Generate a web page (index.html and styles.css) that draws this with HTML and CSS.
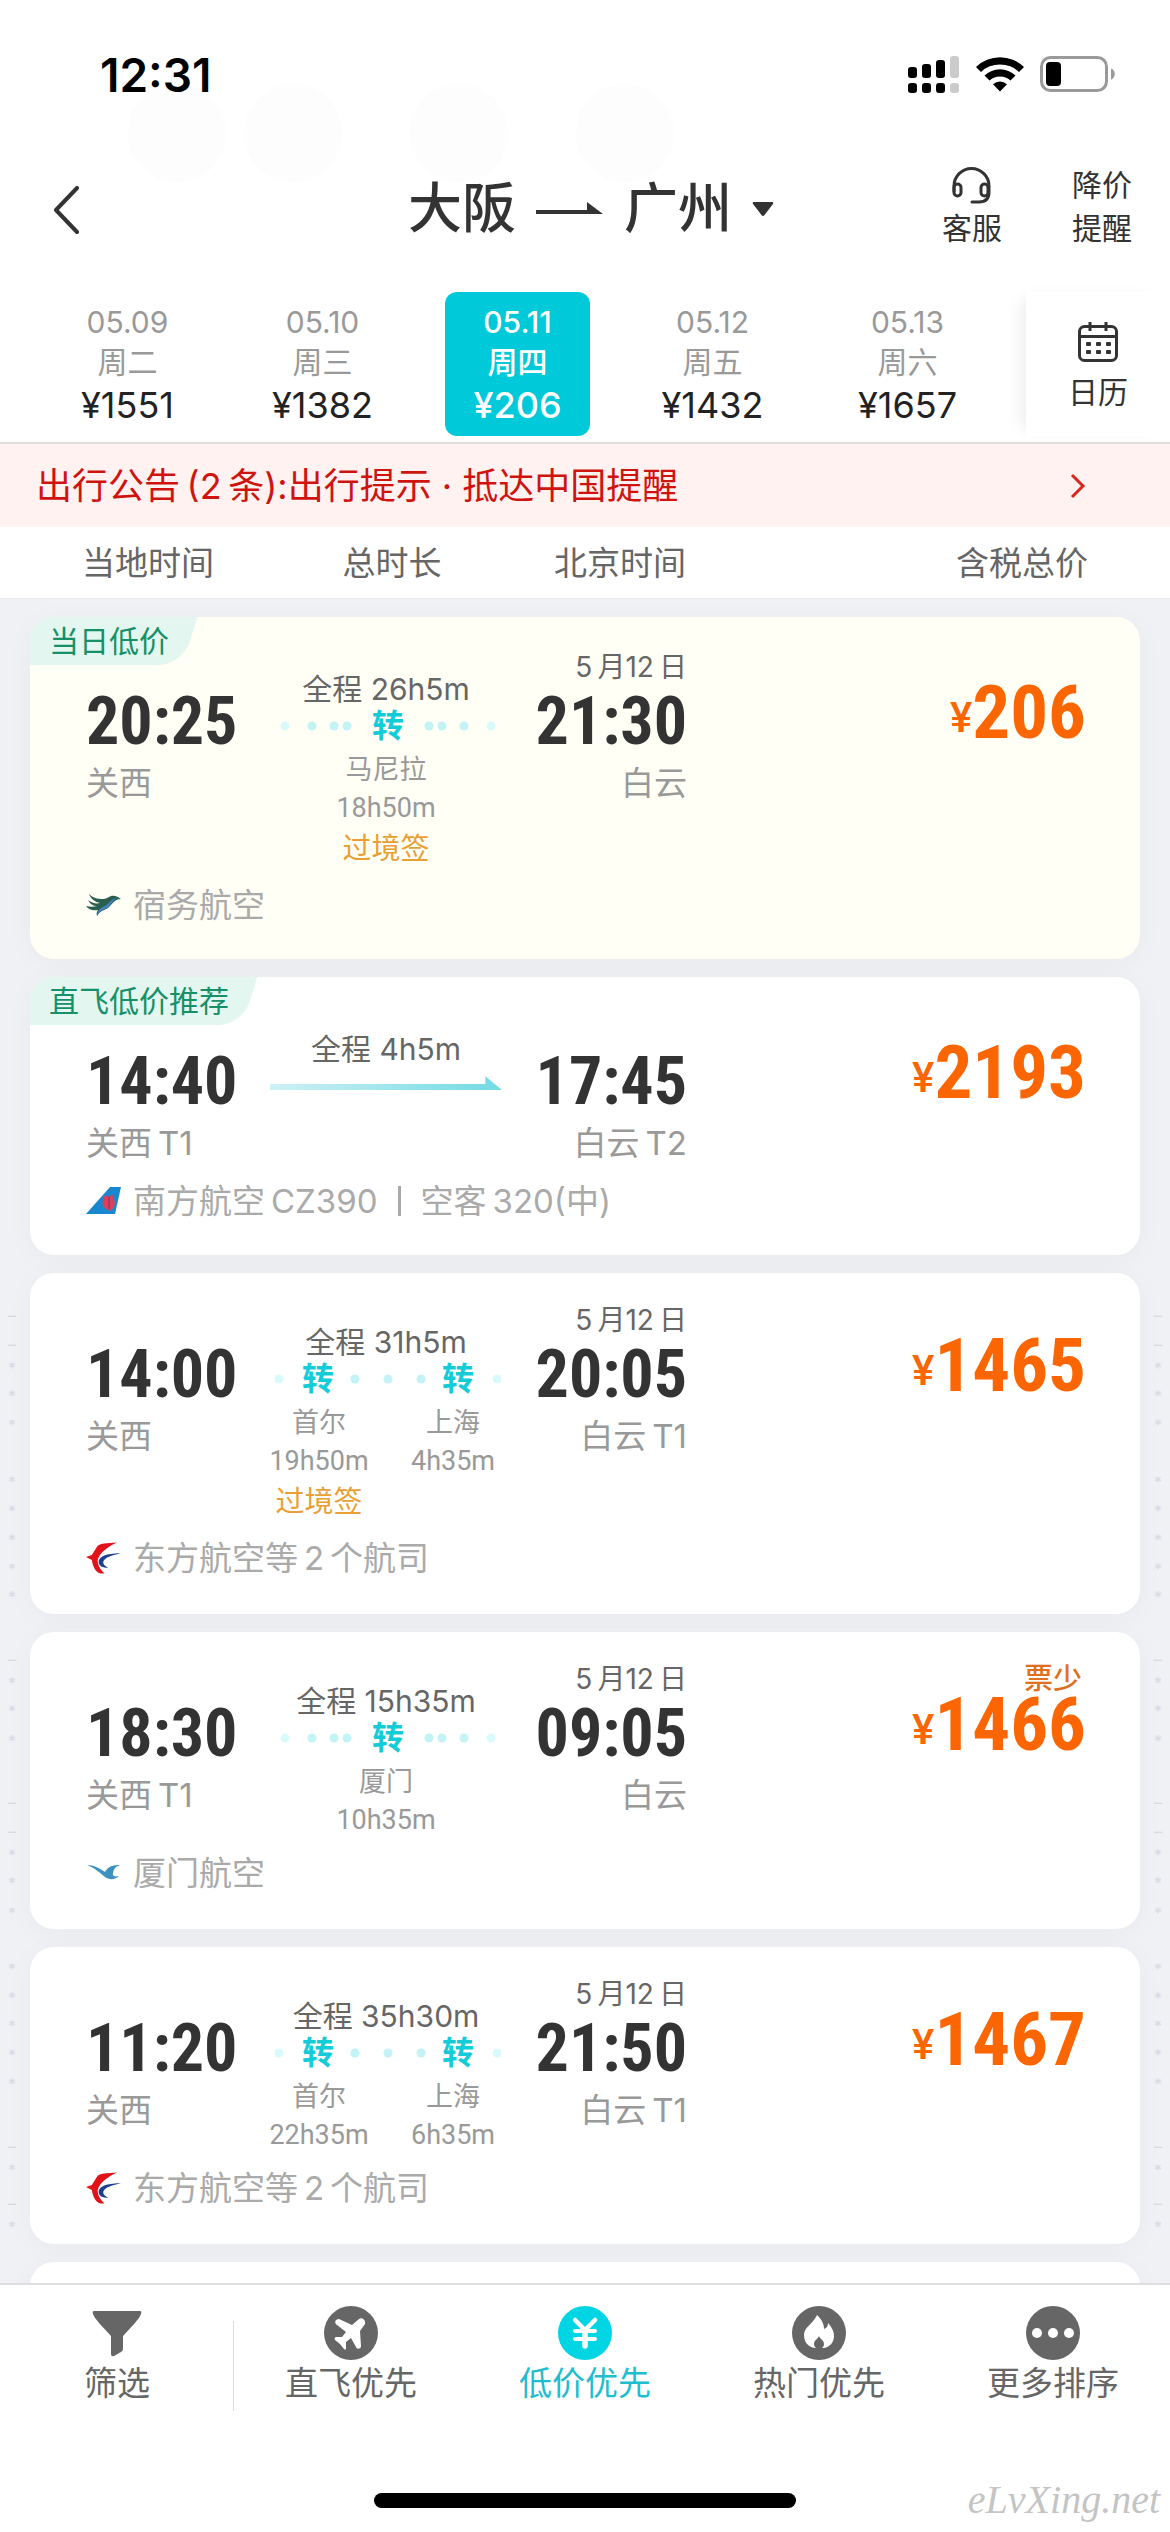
FILE: index.html
```html
<!DOCTYPE html>
<html lang="zh-CN">
<head>
<meta charset="utf-8">
<meta name="viewport" content="width=device-width, initial-scale=1">
<title>大阪 - 广州 机票</title>
<link rel="stylesheet" href="styles.css">
</head>
<body>
<svg class="defs" aria-hidden="true">
  <symbol id="dots-left" viewBox="0 0 78 10">
    <circle cx="11" cy="5" r="4.5" fill="#d9fafb"/><circle cx="38" cy="5" r="4.5" fill="#c3f3f5"/><circle cx="60" cy="5" r="4.5" fill="#c3f3f5"/><circle cx="73" cy="5" r="4.5" fill="#c3f3f5"/>
  </symbol>
  <symbol id="dots-right" viewBox="0 0 78 10">
    <circle cx="5" cy="5" r="4.5" fill="#c3f3f5"/><circle cx="18" cy="5" r="4.5" fill="#c3f3f5"/><circle cx="40" cy="5" r="4.5" fill="#c3f3f5"/><circle cx="67" cy="5" r="4.5" fill="#d9fafb"/>
  </symbol>
  <symbol id="dots-mid" viewBox="0 0 76 10">
    <circle cx="5" cy="5" r="4.5" fill="#c3f3f5"/><circle cx="38" cy="5" r="4.5" fill="#c3f3f5"/><circle cx="71" cy="5" r="4.5" fill="#c3f3f5"/>
  </symbol>
  <symbol id="dot-end" viewBox="0 0 14 10"><circle cx="7" cy="5" r="4.5" fill="#d9fafb"/></symbol>
  <symbol id="logo-eastern" viewBox="0 0 36 32">
    <path d="M32 0C22 1 13 0 11 5L6 13 0 15l6 3c1 6 3 12 9 14h4c-5-5-7-9-7-14C14 11 21 5 32 0z" fill="#e11218"/>
    <path d="M36 11C25 11 13 13 13 20c0 4 4 6 10 6-4-2-6-4-5-7 2-4 9-6 18-8z" fill="#1c3f94"/>
  </symbol>
</svg>

<header class="top">
  <div class="ghosts" aria-hidden="true"><i></i><i></i><i></i><i></i></div>
  <div class="status">
    <span class="clock">12:31</span>
    <span class="status-icons">
      <svg width="52" height="38" viewBox="0 0 52 38" aria-hidden="true">
        <g fill="#000"><rect x="0" y="11" width="9" height="11" rx="3"/><rect x="14" y="8" width="9" height="14" rx="3"/><rect x="28" y="4" width="9" height="18" rx="3"/><rect x="0" y="27" width="9" height="10" rx="3"/><rect x="14" y="27" width="9" height="10" rx="3"/><rect x="28" y="27" width="9" height="10" rx="3"/></g>
        <g fill="#cbcbcb"><rect x="42" y="0" width="9" height="22" rx="3"/><rect x="42" y="27" width="9" height="10" rx="3"/></g>
      </svg>
      <svg width="48" height="38" viewBox="0 0 48 38" aria-hidden="true">
        <path d="M0 11a34.500 34.500 0 0 1 48 0l-5 5a27.500 27.500 0 0 0-38 0z"/>
        <path d="M8.500 19.500a22.500 22.500 0 0 1 31 0l-5 5a15.500 15.500 0 0 0-21 0z"/>
        <path d="M17 28.200a10.500 10.500 0 0 1 14 0L24 35.500z"/>
      </svg>
      <svg width="76" height="38" viewBox="0 0 76 38" aria-hidden="true">
        <rect x="1.500" y="1.500" width="65" height="33" rx="9" fill="none" stroke="#9a9a9a" stroke-width="3"/>
        <rect x="6" y="6" width="15" height="24" rx="4"/>
        <path d="M71 12.500c5 1.500 5 9.500 0 11z" fill="#9a9a9a"/>
      </svg>
    </span>
  </div>
  <nav class="nav">
    <button class="back" type="button" aria-label="返回">
      <svg width="28" height="48" viewBox="0 0 28 48"><path d="M25 2 4 24l21 22" fill="none" stroke="#333" stroke-width="4" stroke-linecap="round" stroke-linejoin="round"/></svg>
    </button>
    <button class="route" type="button">
      <span>大阪</span>
      <svg width="68" height="14" viewBox="0 0 68 14" aria-hidden="true"><path d="M0 8h51V0l16 12H0z" fill="#333"/></svg>
      <span>广州</span>
      <svg width="22" height="14" viewBox="0 0 22 14" aria-hidden="true"><path d="M2 0h18q2 0 1 2l-8.500 11q-1.500 2-3 0L1 2Q0 0 2 0z" fill="#333"/></svg>
    </button>
    <div class="actions">
      <button class="action" type="button">
        <svg width="42" height="40" viewBox="0 0 42 40" aria-hidden="true"><g fill="none" stroke="#333" stroke-width="3" stroke-linecap="round"><path d="M3 24V19a17.500 17.500 0 0 1 35 0v6c0 7-4 10-10 10h-7"/><rect x="3" y="17" width="7" height="12" rx="3.500"/><rect x="30" y="17" width="7" height="12" rx="3.500"/></g></svg>
        客服
      </button>
      <button class="action" type="button">降价<br>提醒</button>
    </div>
  </nav>
  <div class="dates">
    <div class="strip">
      <button class="day" type="button"><span>05.09</span><span>周二</span><b>¥1551</b></button>
      <button class="day" type="button"><span>05.10</span><span>周三</span><b>¥1382</b></button>
      <button class="day day-on" type="button" aria-pressed="true"><span>05.11</span><span>周四</span><b>¥206</b></button>
      <button class="day" type="button"><span>05.12</span><span>周五</span><b>¥1432</b></button>
      <button class="day" type="button"><span>05.13</span><span>周六</span><b>¥1657</b></button>
    </div>
    <button class="calendar" type="button">
      <svg width="40" height="40" viewBox="0 0 40 40" aria-hidden="true"><g fill="none" stroke="#333" stroke-width="3"><rect x="1.500" y="4.500" width="37" height="34" rx="5"/><path d="M2 14.500h36M12 0v9M28 0v9"/></g><g fill="#333"><rect x="8" y="20" width="5" height="4" rx="1"/><rect x="18" y="20" width="5" height="4" rx="1"/><rect x="28" y="20" width="5" height="4" rx="1"/><rect x="8" y="28" width="5" height="4" rx="1"/><rect x="18" y="28" width="5" height="4" rx="1"/><rect x="28" y="28" width="5" height="4" rx="1"/></g></svg>
      日历
    </button>
  </div>
  <a class="notice" href="#notice">
    <span>出行公告&#8201;(2&#8201;条):出行提示 · 抵达中国提醒</span>
    <svg width="16" height="26" viewBox="0 0 16 26" aria-hidden="true"><path d="M2 2l11 11L2 24" fill="none" stroke="#d5281e" stroke-width="3"/></svg>
  </a>
  <div class="columns"><span>当地时间</span><span class="mid">总时长</span><span class="end">北京时间</span><span class="end">含税总价</span></div>
</header>

<main class="list">
  <svg class="marks marks-left" width="24" height="960" viewBox="0 0 24 960" aria-hidden="true">
    <g id="mark-set">
      <text x="8 8 8 8 8 8 8 8 8 8 8 8 8 8 8 8 8 8 8 8 8" y="71 99 128 185 214 243 272 300 386 414 444 558 586 616 672 701 729 758 787 873 930">*********************</text>
      <text x="8 8 8 8 8 8 8" y="18 47 362 505 534 849 906">–––––––</text>
    </g>
  </svg>
  <svg class="marks marks-right" width="24" height="960" viewBox="0 0 24 960" aria-hidden="true"><use href="#mark-set"/></svg>

  <article class="card card-tagged card-best">
    <span class="tag">当日低价</span>
    <div class="trip">
      <div class="from"><time>20:25</time><span>关西</span></div>
      <div class="leg">
        <span class="total">全程 26h5m</span>
        <div class="path"><svg width="78" height="10"><use href="#dots-left"/></svg><b>转</b><svg width="78" height="10"><use href="#dots-right"/></svg></div>
        <div class="stops"><div class="stop"><span>马尼拉</span><span>18h50m</span><em>过境签</em></div></div>
      </div>
      <div class="to"><span class="date">5&#8201;月12&#8201;日</span><time>21:30</time><span>白云</span></div>
      <div class="price"><span class="few"></span><strong><i>¥</i>206</strong></div>
    </div>
    <div class="airline">
      <svg width="35" height="32" viewBox="0 0 35 32" aria-hidden="true"><path d="M3 5c4 4 8 5 14 5 3 0 5-2 8-3 4-1 7 1 10 3-6 0-8 4-11 7-4 5-9 3-13 10-1-3 0-4 1-6-5 1-9 0-12-4 4 1 7 1 11 0-4 0-7-2-9-6 4 3 8 4 12 3C9 13 5 10 3 5z" fill="#2a5f50"/><path d="M34 9c-7 0-8 6-13 10-4 2-7 2-10 8 1-7 4-8 8-10 5-3 7-9 15-8z" fill="#3f84c4"/></svg>
      <span>宿务航空</span>
    </div>
  </article>

  <article class="card card-tagged">
    <span class="tag">直飞低价推荐</span>
    <div class="trip">
      <div class="from"><time>14:40</time><span>关西&#8201;T1</span></div>
      <div class="leg">
        <span class="total">全程 4h5m</span>
        <svg class="direct" viewBox="0 0 236 34" aria-hidden="true"><defs><linearGradient id="fly"><stop offset="0" stop-color="#cdf1f5"/><stop offset="1" stop-color="#72dae4"/></linearGradient></defs><path d="M0 15h219V7l17 14H0z" fill="url(#fly)"/></svg>
      </div>
      <div class="to"><span class="date"></span><time>17:45</time><span>白云&#8201;T2</span></div>
      <div class="price"><span class="few"></span><strong><i>¥</i>2193</strong></div>
    </div>
    <div class="airline">
      <svg width="35" height="32" viewBox="0 0 35 32" aria-hidden="true"><path d="M24 2h11l-6 27H0z" fill="#1787cf"/><path d="M19 10l4 2 3-3 2 5c2 6 0 9-4 12l-4-2c-5-4-4-8-1-14z" fill="#d8415c"/><path d="M23 12v12" stroke="#8c2c5c" stroke-width="1"/></svg>
      <span>南方航空&#8201;CZ390</span><span class="bar"></span><span>空客&#8201;320(中)</span>
    </div>
  </article>

  <article class="card">
    <div class="trip">
      <div class="from"><time>14:00</time><span>关西</span></div>
      <div class="leg">
        <span class="total">全程 31h5m</span>
        <div class="path path-two"><svg width="14" height="10"><use href="#dot-end"/></svg><b>转</b><svg width="76" height="10"><use href="#dots-mid"/></svg><b>转</b><svg width="14" height="10"><use href="#dot-end"/></svg></div>
        <div class="stops"><div class="stop"><span>首尔</span><span>19h50m</span><em>过境签</em></div><div class="stop"><span>上海</span><span>4h35m</span></div></div>
      </div>
      <div class="to"><span class="date">5&#8201;月12&#8201;日</span><time>20:05</time><span>白云&#8201;T1</span></div>
      <div class="price"><span class="few"></span><strong><i>¥</i>1465</strong></div>
    </div>
    <div class="airline"><svg width="35" height="32"><use href="#logo-eastern"/></svg><span>东方航空等&#8201;2&#8201;个航司</span></div>
  </article>

  <article class="card">
    <div class="trip">
      <div class="from"><time>18:30</time><span>关西&#8201;T1</span></div>
      <div class="leg">
        <span class="total">全程 15h35m</span>
        <div class="path"><svg width="78" height="10"><use href="#dots-left"/></svg><b>转</b><svg width="78" height="10"><use href="#dots-right"/></svg></div>
        <div class="stops"><div class="stop"><span>厦门</span><span>10h35m</span></div></div>
      </div>
      <div class="to"><span class="date">5&#8201;月12&#8201;日</span><time>09:05</time><span>白云</span></div>
      <div class="price"><span class="few">票少</span><strong><i>¥</i>1466</strong></div>
    </div>
    <div class="airline">
      <svg width="35" height="32" viewBox="0 0 35 32" aria-hidden="true"><path d="M1 8c7 0 12 3 18 7 3-6 8-7 15-7-5 2-6 4-7 8-1 3 2 4 6 3-4 4-10 4-14 1C14 16 9 11 1 8z" fill="#3d93bf"/></svg>
      <span>厦门航空</span>
    </div>
  </article>

  <article class="card">
    <div class="trip">
      <div class="from"><time>11:20</time><span>关西</span></div>
      <div class="leg">
        <span class="total">全程 35h30m</span>
        <div class="path path-two"><svg width="14" height="10"><use href="#dot-end"/></svg><b>转</b><svg width="76" height="10"><use href="#dots-mid"/></svg><b>转</b><svg width="14" height="10"><use href="#dot-end"/></svg></div>
        <div class="stops"><div class="stop"><span>首尔</span><span>22h35m</span></div><div class="stop"><span>上海</span><span>6h35m</span></div></div>
      </div>
      <div class="to"><span class="date">5&#8201;月12&#8201;日</span><time>21:50</time><span>白云&#8201;T1</span></div>
      <div class="price"><span class="few"></span><strong><i>¥</i>1467</strong></div>
    </div>
    <div class="airline"><svg width="35" height="32"><use href="#logo-eastern"/></svg><span>东方航空等&#8201;2&#8201;个航司</span></div>
  </article>

  <article class="card card-next"></article>
</main>

<footer class="bottom">
  <div class="tabs">
    <button class="tab tab-filter" type="button">
      <svg width="54" height="54" viewBox="0 0 54 54" aria-hidden="true"><path d="M4 5h46q2 0 1 3c-1 3-3 5-6 9L33 30v13q0 2-2 3l-7 4q-3 1-3-2V30L9 17C6 13 4 11 3 8Q2 5 4 5z" fill="#666"/></svg>筛选
    </button>
    <button class="tab" type="button">
      <svg width="54" height="54" viewBox="0 0 54 54" aria-hidden="true"><circle cx="27" cy="27" r="27" fill="#666"/><path d="M28 19l7-6c3-2 7 1 6 5l-5 7 1 15c0 3-4 4-5 1l-5-9-5 4v6c0 2-1 2-2 1l-4-5-5-4c-1-1 0-3 1-3h6l4-5-9-7c-3-2-2-6 2-6z" fill="#fff"/></svg>直飞优先
    </button>
    <button class="tab tab-on" type="button" aria-pressed="true">
      <svg width="54" height="54" viewBox="0 0 54 54" aria-hidden="true"><circle cx="27" cy="27" r="27" fill="#00d5e4"/><g fill="none" stroke="#fff" stroke-linecap="round"><path d="M17 14l10 10 10-10" stroke-width="4.500"/><path d="M17 25h20M17 33h20" stroke-width="4"/><path d="M27 25v15" stroke-width="5.500"/></g></svg>低价优先
    </button>
    <button class="tab" type="button">
      <svg width="54" height="54" viewBox="0 0 54 54" aria-hidden="true"><circle cx="27" cy="27" r="27" fill="#666"/><path d="M25 9c4 4 7 8 7 14 3-1 4-3 4-6 4 4 6 9 6 13 0 6-4 11-10 12H23c-7-1-11-6-11-13 0-8 9-11 13-20z" fill="#fff"/><path d="M27 30c-1 3-5 4-5 8 0 2 1 3 2 4h6c1-1 2-2 2-4 0-4-4-5-5-8z" fill="#666"/></svg>热门优先
    </button>
    <button class="tab" type="button">
      <svg width="54" height="54" viewBox="0 0 54 54" aria-hidden="true"><circle cx="27" cy="27" r="27" fill="#666"/><g fill="#fff"><circle cx="11" cy="27" r="5"/><circle cx="27" cy="27" r="5"/><circle cx="43" cy="27" r="5"/></g></svg>更多排序
    </button>
  </div>
  <div class="home"></div>
  <span class="site">eLvXing.net</span>
</footer>
</body>
</html>
```
FILE: styles.css
```css
* { box-sizing: border-box; }

body {
  margin: 0;
  height: 100vh;
  display: flex;
  flex-direction: column;
  font-family: Inter, "Noto Sans CJK SC", sans-serif;
  font-size: 33px;
  line-height: 40px;
  color: #333;
  background: #f0f1f5;
}

button {
  margin: 0;
  padding: 0;
  border: 0;
  background: none;
  font: inherit;
  color: inherit;
}

svg { display: block; flex: none; }
i, em { font-style: normal; }
.defs { position: absolute; width: 0; height: 0; }

/* Header */
.top { flex: none; position: relative; background: #fff; }

.ghosts { position: absolute; top: 84px; left: 128px; display: flex; gap: 44px; }
.ghosts i { width: 98px; height: 98px; border-radius: 50%; background: #fdfdfd; }
.ghosts i:first-child { margin-right: -26px; }
.ghosts i:nth-child(3) { margin: 0 24px; }

.status {
  position: relative;
  display: flex;
  justify-content: space-between;
  align-items: center;
  height: 150px;
  padding: 0 54px 0 100px;
}
.clock { font-size: 46px; font-weight: 600; color: #000; }
.status-icons { display: flex; gap: 16px; }

.nav {
  position: relative;
  display: grid;
  grid-template-columns: 1fr auto 1fr;
  align-items: center;
  height: 116px;
  padding: 2px 38px 0 50px;
}
.back { justify-self: start; padding: 2px 2px 0; }
.route { display: flex; align-items: center; gap: 20px; font-size: 54px; line-height: 64px; font-weight: 500; }
.actions { justify-self: end; display: flex; gap: 70px; }
.action {
  display: flex;
  flex-direction: column;
  align-items: center;
  justify-content: flex-end;
  padding-bottom: 4px;
  font-size: 30px;
  line-height: 43px;
}

.dates { display: flex; padding: 26px 0 6px; }
.strip { flex: 1; display: flex; gap: 50px; padding-left: 55px; overflow: hidden; }
.day {
  flex: none;
  width: 145px;
  padding: 10px 0 8px;
  display: flex;
  flex-direction: column;
  align-items: center;
  border-radius: 12px;
  font-size: 30px;
  color: #999;
}
.day b { font-size: 36px; line-height: 46px; font-weight: 400; color: #222; }
.day-on, .day-on b { color: #fff; font-weight: 500; }
.day-on { background: #00cad9; }
.calendar {
  flex: none;
  width: 144px;
  display: flex;
  flex-direction: column;
  align-items: center;
  justify-content: center;
  gap: 10px;
  padding-top: 6px;
  font-size: 30px;
  box-shadow: -12px 0 16px -8px rgba(0, 0, 0, .08);
}

.notice {
  display: flex;
  justify-content: space-between;
  align-items: center;
  height: 85px;
  padding: 0 84px 0 36px;
  border-top: 2px solid #ddd;
  background: #fff2f0;
  font-size: 36px;
  color: #cf1410;
  text-decoration: none;
}

.columns {
  display: grid;
  grid-template-columns: 194px 232px 178px 1fr;
  align-items: center;
  height: 72px;
  padding: 0 82px;
  border-bottom: 1px solid #e8e8ea;
  color: #666;
}
.mid { text-align: center; }
.end { text-align: right; }

/* Flight list */
.list {
  flex: 1;
  min-height: 0;
  position: relative;
  display: flex;
  flex-direction: column;
  gap: 18px;
  padding: 18px 30px 0;
  overflow: hidden;
}

.marks { position: absolute; top: 704px; font-size: 16px; fill: #d9dade; }
.marks-left { left: 0; }
.marks-right { right: 0; }

.card {
  flex: none;
  position: relative;
  padding: 29px 54px 36px 56px;
  border-radius: 24px;
  background: #fff;
  box-shadow: 0 4px 30px rgba(0, 0, 0, .03);
}
.card-tagged { padding-top: 32px; padding-bottom: 34px; }
.card-best { background: #fffff6; }
.card-next { height: 240px; }

.tag {
  position: absolute;
  z-index: 0;
  top: 0;
  left: 0;
  padding: 0 29px 0 19px;
  font-size: 30px;
  line-height: 48px;
  color: #159068;
  border-top-left-radius: 24px;
  overflow: hidden;
}
.tag::before {
  content: "";
  position: absolute;
  inset: 0 8px 0 -20px;
  z-index: -1;
  background: #e3f6ef;
  border-bottom-right-radius: 24px;
  transform: skewX(-17deg);
}

.trip { display: grid; grid-template-columns: 184px 232px 185px 1fr; }
.from, .to { display: flex; flex-direction: column; line-height: 48px; color: #999; }
.from { padding-top: 38px; }
.to { text-align: right; }
.from time, .to time {
  margin-bottom: 2px;
  font: 700 66px/70px "Roboto Condensed", Roboto, sans-serif;
  color: #333;
}
.to .date { height: 38px; font-size: 28px; line-height: 36px; color: #666; }

.leg { padding-top: 20px; text-align: center; }
.total { display: block; font-size: 30px; line-height: 40px; color: #666; }
.path { display: flex; align-items: center; justify-content: center; gap: 20px; height: 34px; padding-left: 4px; }
.path-two { gap: 16px; }
.path b { width: 32px; font-size: 32px; line-height: 34px; font-weight: 700; color: #14ccd8; }
.direct { width: 100%; height: 34px; }
.stops { display: flex; justify-content: center; gap: 4px; padding-top: 8px; }
.stop {
  flex: none;
  width: 130px;
  display: flex;
  flex-direction: column;
  font: 27px/38px Roboto, "Noto Sans CJK SC", sans-serif;
  color: #999;
  white-space: nowrap;
}
.stop em { font-size: 29px; line-height: 44px; color: #e8a035; }

.price { display: flex; flex-direction: column; text-align: right; color: #fb6602; }
.few { height: 26px; padding-right: 4px; font-size: 29px; line-height: 36px; font-weight: 500; color: #e0701f; }
.price strong { font: 700 75px/74px "Roboto Condensed", Roboto, sans-serif; }
.price i { font: 500 42px/42px Roboto, sans-serif; vertical-align: 6px; }

.airline { display: flex; align-items: center; margin-top: 14px; color: #aaa; }
.airline svg { margin-right: 12px; }
.bar { width: 3px; height: 30px; margin: 0 20px; background: #aaa; }

/* Sort bar */
.bottom { flex: none; position: relative; border-top: 2px solid #dedede; background: #fff; }
.tabs { display: flex; }
.tab {
  flex: 1;
  position: relative;
  display: flex;
  flex-direction: column;
  align-items: center;
  gap: 3px;
  padding-top: 21px;
  color: #666;
}
.tab-on { color: #1fbdd0; }
.tab-filter::after {
  content: "";
  position: absolute;
  right: 0;
  top: 36px;
  width: 1px;
  height: 90px;
  background: #ddd;
}
.home { width: 36%; height: 15px; margin: 90px auto 24px; border-radius: 8px; background: #000; }
.site {
  position: absolute;
  right: 10px;
  bottom: 12px;
  font: italic 40px/40px "Liberation Serif", serif;
  color: #c4c4c4;
}
```
